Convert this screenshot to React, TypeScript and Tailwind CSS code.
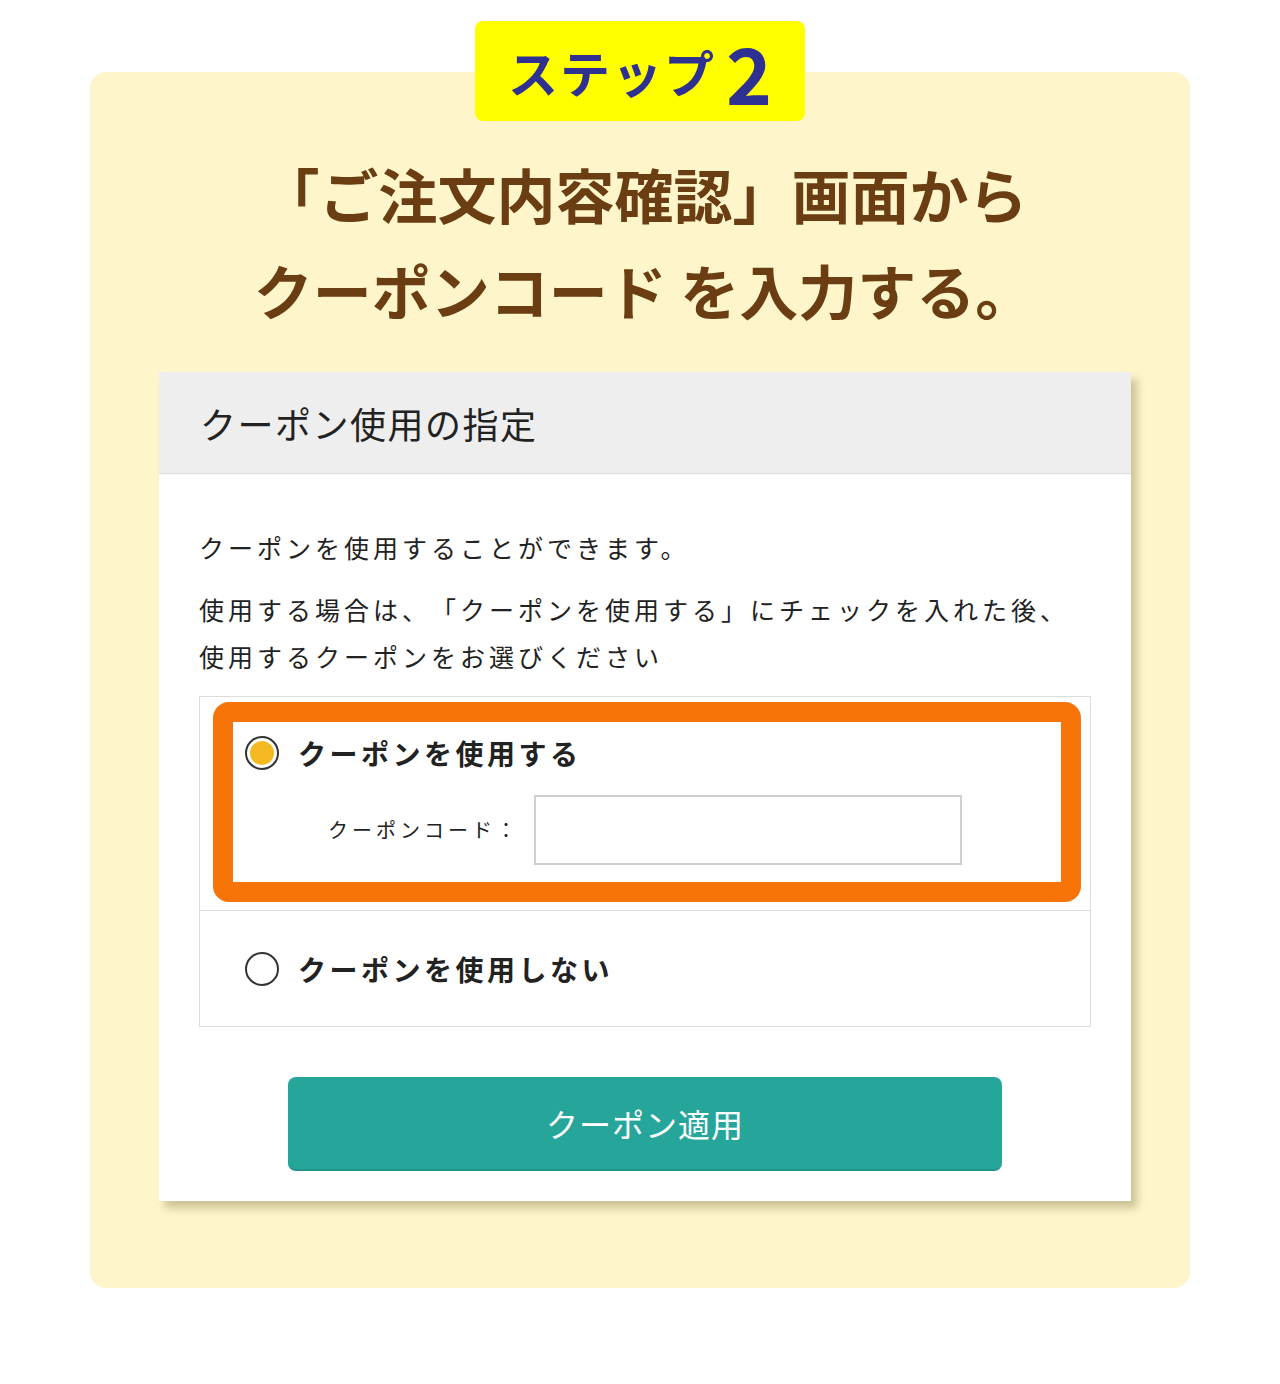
import type { FC } from "react";

const JP = "font-['Noto_Sans_CJK_JP','Noto_Sans',sans-serif] [text-spacing-trim:space-all]";

const Radio: FC<{ checked?: boolean }> = ({ checked }) => (
  <span className="w-[34px] h-[34px] rounded-full border-2 border-[#333] bg-white flex items-center justify-center shrink-0">
    {checked && <span className="w-[24px] h-[24px] rounded-full bg-[#f4b920]" />}
  </span>
);

const App: FC = () => {
  return (
    <div className={`w-full h-[1384px] bg-white pt-[72px] ${JP}`}>
      {/* 背景パネル */}
      <div className="relative mx-[90px] rounded-[16px] bg-[#fef5cb] pt-[74px] pb-[87px]">
        {/* ステップ バッジ */}
        <div className="absolute left-1/2 -translate-x-1/2 -top-[51px] w-[330px] h-[100px] rounded-[8px] bg-[#ffff00] flex items-center justify-center text-[#2e3192] font-bold">
          <span className="text-[50px] leading-none tracking-[2px]">ステップ</span>
          <span className="text-[78px] leading-none ml-[10px]">2</span>
        </div>

        <h2 className="text-center text-[#6b3d12] text-[59px] leading-[96px] font-bold pl-[8px]">
          「ご注文内容確認」画面から
          <br />
          クーポンコード を入力する。
        </h2>

        {/* 画面キャプチャ風カード */}
        <div className="mt-[34px] ml-[69px] mr-[59px] bg-white shadow-[6px_7px_8px_rgba(90,80,30,0.3)]">
          <div className="h-[102px] bg-[#eeeeee] border-b border-[#dcdcdc] flex items-center px-[41px]">
            <span className="text-[36px] tracking-[1.5px] text-[#222]">クーポン使用の指定</span>
          </div>

          <div className="px-[40px] pt-[50px] pb-[30px]">
            <p className="text-[25px] leading-[47px] tracking-[4px] text-[#222]">
              クーポンを使用することができます。
            </p>
            <p className="mt-[15px] text-[25px] leading-[47px] tracking-[4px] text-[#222]">
              使用する場合は、「クーポンを使用する」にチェックを入れた後、
              <br />
              使用するクーポンをお選びください
            </p>

            {/* 選択肢 */}
            <div className="mt-[16px] border border-[#dddddd]">
              <div className="pt-[5px] pb-[8px] pl-[13px] pr-[9px] border-b border-[#dddddd]">
                <div className="border-[20px] border-[#f77408] rounded-[16px] pt-[14px] pb-[17px] pl-[12px]">
                  <div className="flex items-center gap-[19px]">
                    <Radio checked />
                    <span className="text-[28px] leading-none font-bold tracking-[3.5px] text-[#222]">クーポンを使用する</span>
                  </div>
                  <div className="mt-[25px] pl-[83px] flex items-center">
                    <span className="text-[20px] leading-none tracking-[4px] text-[#222]">クーポンコード：</span>
                    <div className="ml-[14px] w-[428px] h-[70px] border-2 border-[#cfcfcf] bg-white" />
                  </div>
                </div>
              </div>
              <div className="h-[115px] flex items-center pl-[45px] gap-[19px]">
                <Radio />
                <span className="text-[28px] leading-none font-bold tracking-[3.5px] text-[#222]">クーポンを使用しない</span>
              </div>
            </div>

            <button className="mt-[50px] mx-auto w-[714px] h-[94px] rounded-[8px] bg-[#26a69a] border-b-2 border-[#1f9488] flex items-center justify-center text-white text-[32px] leading-none tracking-[1px]">
              クーポン適用
            </button>
          </div>
        </div>
      </div>
    </div>
  );
};

export default App;
